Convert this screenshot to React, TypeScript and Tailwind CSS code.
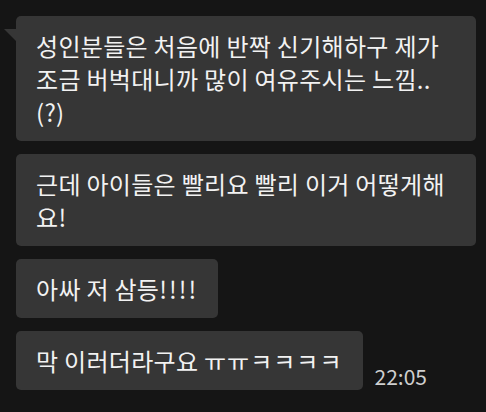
export default function App() {
  const bubble =
    "bg-[#363636] rounded-[5px] px-5 py-[13px] text-[24px] leading-[33px] tracking-[0.3px] text-[#f2f2f2]";

  return (
    <div
      className="w-[486px] h-[412px] bg-[#151515] overflow-hidden pt-4 pl-4 pr-[10px]"
      style={{ fontFamily: '"Noto Sans CJK KR", "Noto Sans", sans-serif' }}
    >
      <div className="flex flex-col gap-[13px]">
        <div className="relative">
          <div className="absolute -left-3 top-[13px] w-3 h-3 bg-[#363636] [clip-path:polygon(0_0,100%_0,100%_100%)]" />
          <div className={bubble}>
            성인분들은 처음에 반짝 신기해하구 제가
            <br />
            조금 버벅대니까 많이 여유주시는 느낌..
            <br />
            (?)
          </div>
        </div>

        <div className={bubble}>
          근데 아이들은 빨리요 빨리 이거 어떻게해
          <br />
          요!
        </div>

        <div className="flex">
          <div className={bubble}>
            아싸 저 삼등<span className="tracking-[2px]">!!!!</span>
          </div>
        </div>

        <div className="flex items-end gap-3">
          <div className={bubble}>
            막 이러더라구요 <span className="tracking-[1px]">ㅠㅠㅋㅋㅋㅋ</span>
          </div>
          <span className="text-[21px] leading-6 text-[#cfcfcf] mb-[2px]">22:05</span>
        </div>
      </div>
    </div>
  );
}
